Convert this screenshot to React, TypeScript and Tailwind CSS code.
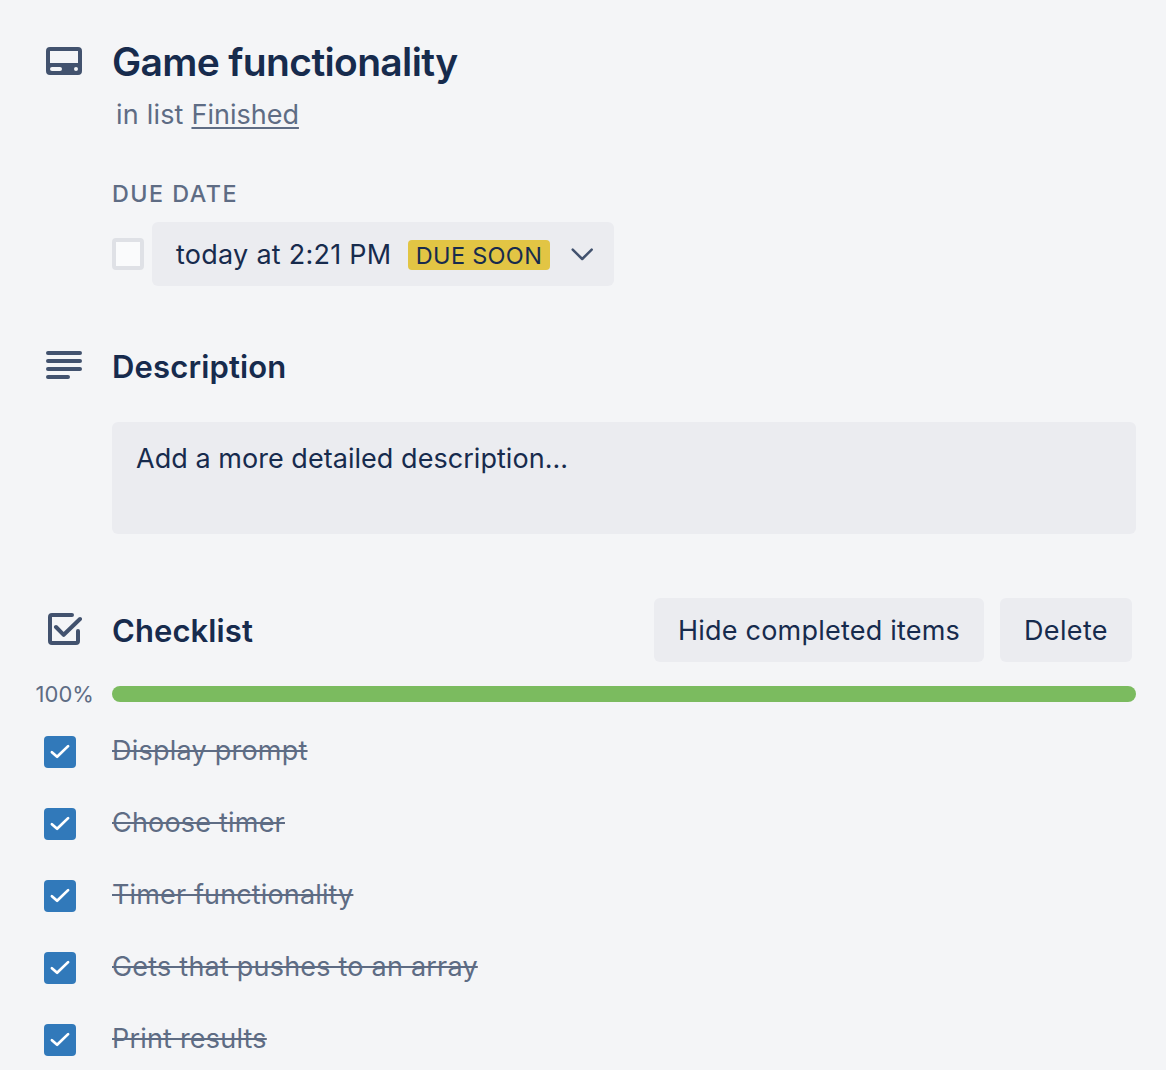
import React from "react";

const items = [
  { label: "Display prompt", tracking: "tracking-[0.23px]" },
  { label: "Choose timer", tracking: "tracking-[0.2px]" },
  { label: "Timer functionality", tracking: "tracking-[0.14px]" },
  { label: "Gets that pushes to an array", tracking: "tracking-[0.21px]" },
  { label: "Print results", tracking: "tracking-[0.2px]" },
];

function CardIcon() {
  return (
    <svg className="h-7 w-9 shrink-0" viewBox="0 0 36 28">
      <path fill="#42526e" fillRule="evenodd" d="M4 0h28a4 4 0 0 1 4 4v20a4 4 0 0 1-4 4H4a4 4 0 0 1-4-4V4a4 4 0 0 1 4-4ZM4 4v12h28V4ZM6 20a2 2 0 0 0 0 4h8a2 2 0 0 0 0-4ZM30 20a2 2 0 1 0 0 4a2 2 0 0 0 0-4Z" />
    </svg>
  );
}

function LinesIcon() {
  return (
    <svg className="h-7 w-9 shrink-0" viewBox="0 0 36 28" stroke="#42526e" strokeWidth="4" strokeLinecap="round">
      <path d="M2 2h32M2 10h32M2 18h32M2 26h20" />
    </svg>
  );
}

function ChecklistIcon() {
  return (
    <svg className="h-9 w-9 shrink-0" viewBox="0 0 36 36" fill="none" stroke="#42526e" strokeWidth="4" strokeLinecap="round">
      <path d="M26 3H6a2 2 0 0 0-2 2v24a2 2 0 0 0 2 2h24a2 2 0 0 0 2-2V19" />
      <path d="M10 15l7.7 7.8L34 7" strokeLinejoin="round" />
    </svg>
  );
}

function Checked() {
  return (
    <svg className="ml-11 h-8 w-8 shrink-0 rounded-[4px] bg-[#3179ba]" viewBox="0 0 32 32" fill="none">
      <path d="M7.9 16.2l5.2 4.6L24.1 10.1" stroke="white" strokeWidth="2.7" strokeLinecap="round" strokeLinejoin="round" />
    </svg>
  );
}

export default function App() {
  return (
    <main className="h-[1070px] w-[1166px] overflow-hidden whitespace-nowrap bg-[#f4f5f7] font-['Inter',sans-serif] text-[27px] font-[430] leading-[40px] text-[#172b4d]">
      <header className="flex h-[142px] pl-[46px] pt-10">
        <div className="mr-[30px] pt-[7px]"><CardIcon /></div>
        <div>
          <h1 className="text-[39px] font-semibold leading-[44px] tracking-[-0.65px]">Game functionality</h1>
          <p className="ml-1 mt-[11px] text-[#5e6c84]">
            <span className="tracking-[0.2px]">in list </span>
            <a className="underline decoration-2 underline-offset-[3px]">Finished</a>
          </p>
        </div>
      </header>

      <section className="ml-28 mt-9">
        <h3 className="text-[23.3px] font-medium leading-8 tracking-[1.5px] text-[#5e6c84]">DUE DATE</h3>
        <div className="mt-3 flex items-center gap-2">
          <div className="h-8 w-8 rounded-[4px] border-4 border-[#dfe1e6] bg-[#fafbfc]" />
          <button className="flex h-16 w-[462px] items-center rounded-[6px] bg-[#ebecf0] pl-6">
            <span className="w-[232px] pt-0.5 text-left tracking-[0.26px]">today at 2:21 PM</span>
            <span className="mt-[2px] h-[30px] w-[142px] rounded-[4px] bg-[#e2c544] pt-px text-center text-[23.5px] leading-[30px] tracking-[0.3px]">DUE SOON</span>
            <svg className="ml-5 h-6 w-6" viewBox="0 0 24 24" fill="none">
              <path d="M2.7 7.6L12.2 17L21.7 7.6" stroke="#42526e" strokeWidth="2.5" strokeLinecap="round" strokeLinejoin="round" />
            </svg>
          </button>
        </div>
      </section>

      <section className="mt-[61px]">
        <div className="flex gap-[30px] pl-[46px]">
          <div className="pt-1"><LinesIcon /></div>
          <h2 className="text-[31px] font-semibold tracking-[0.15px]">Description</h2>
        </div>
        <div className="ml-28 mt-[35px] h-28 w-[1024px] rounded-[6px] bg-[#ebecf0] pl-6 pt-[17px] tracking-[0.04px]">
          Add a more detailed description...
        </div>
      </section>

      <section className="mt-16">
        <div className="flex h-16 items-center pl-[46px] pr-[34px]">
          <ChecklistIcon />
          <h2 className="ml-[30px] mt-px grow text-[31px] font-semibold tracking-[0.1px]">Checklist</h2>
          <button className="mr-4 h-16 w-[330px] rounded-[6px] bg-[#ebecf0] pt-0.5 tracking-[0.22px]">Hide completed items</button>
          <button className="h-16 w-[132px] rounded-[6px] bg-[#ebecf0] pt-0.5 tracking-[0.35px]">Delete</button>
        </div>
        <div className="mt-4 flex h-8 items-center">
          <span className="w-28 pl-[35.6px] text-[22px] leading-8 text-[#5e6c84]">100%</span>
          <div className="h-4 w-[1024px] rounded-full bg-[#7bbb5f]" />
        </div>
        <ul className="mt-5">
          {items.map((item) => (
            <li key={item.label} className="flex h-[72px] gap-9">
              <div className="pt-[6px]"><Checked /></div>
              <span className={`${item.tracking} mt-px text-[#5e6c84] line-through decoration-[2.4px]`}>{item.label}</span>
            </li>
          ))}
        </ul>
      </section>
    </main>
  );
}
